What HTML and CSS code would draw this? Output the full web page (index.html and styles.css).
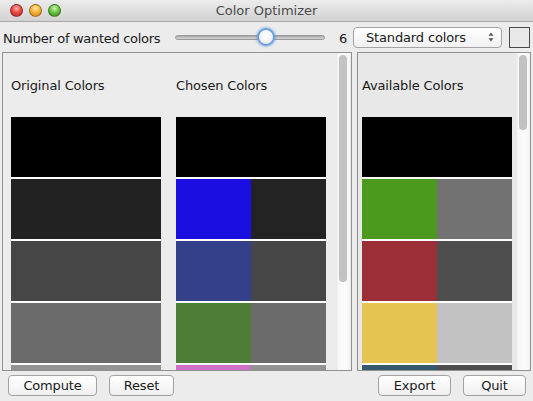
FILE: index.html
```html
<!DOCTYPE html>
<html>
<head>
<meta charset="utf-8">
<link rel="stylesheet" href="styles.css">
</head>
<body>
<div class="window">
  <div class="titlebar">
    <div class="lights">
      <span class="light red"></span>
      <span class="light yellow"></span>
      <span class="light green"></span>
    </div>
    <div class="title">Color Optimizer</div>
  </div>
  <div class="toolbar">
    <div class="tb-label">Number of wanted colors</div>
    <div class="slider">
      <div class="track"></div>
      <div class="thumb"></div>
    </div>
    <div class="count">6</div>
    <div class="select">
      <span>Standard colors</span>
      <svg class="arrows" width="6" height="10" viewBox="0 0 6 10"><path d="M3 0.5 L5.5 3.8 L0.5 3.8 Z M3 9.5 L5.5 6.2 L0.5 6.2 Z" fill="#555"/></svg>
    </div>
    <div class="swatch"></div>
  </div>
  <div class="panels">
    <div class="panel left">
      <div class="cols">
        <div class="col">
          <div class="col-head">Original Colors</div>
          <div class="blocks">
            <div class="blk"><i style="background:#000"></i></div>
            <div class="blk"><i style="background:#222"></i></div>
            <div class="blk"><i style="background:#464646"></i></div>
            <div class="blk"><i style="background:#6b6b6b"></i></div>
            <div class="blk"><i style="background:#939393"></i></div>
          </div>
        </div>
        <div class="col">
          <div class="col-head">Chosen Colors</div>
          <div class="blocks">
            <div class="blk"><i style="background:#000"></i></div>
            <div class="blk"><i style="background:#1a0ee0"></i><i style="background:#232323"></i></div>
            <div class="blk"><i style="background:#34408a"></i><i style="background:#464646"></i></div>
            <div class="blk"><i style="background:#4e7d37"></i><i style="background:#6b6b6b"></i></div>
            <div class="blk"><i style="background:#cc70c6"></i><i style="background:#939393"></i></div>
          </div>
        </div>
      </div>
      <div class="scroll"><div class="sthumb long"></div></div>
    </div>
    <div class="panel right">
      <div class="cols">
        <div class="col">
          <div class="col-head">Available Colors</div>
          <div class="blocks">
            <div class="blk"><i style="background:#000"></i></div>
            <div class="blk"><i style="background:#4b9a1e"></i><i style="background:#727272"></i></div>
            <div class="blk"><i style="background:#9a2f38"></i><i style="background:#4e4e4e"></i></div>
            <div class="blk"><i style="background:#e5c452"></i><i style="background:#c2c2c2"></i></div>
            <div class="blk"><i style="background:#345a6e"></i><i style="background:#4e4e4e"></i></div>
          </div>
        </div>
      </div>
      <div class="scroll"><div class="sthumb short"></div></div>
    </div>
  </div>
  <div class="buttons">
    <button class="btn compute">Compute</button>
    <button class="btn reset">Reset</button>
    <div class="spacer"></div>
    <button class="btn export">Export</button>
    <button class="btn quit">Quit</button>
  </div>
</div>
</body>
</html>
```
FILE: styles.css
```css
* { box-sizing: border-box; }
html, body { margin: 0; padding: 0; }
body {
  width: 533px;
  height: 401px;
  overflow: hidden;
  background: #ececec;
  font-family: "DejaVu Sans", sans-serif;
  font-size: 13px;
  letter-spacing: -0.15px;
  color: #1a1a1a;
}
.window { width: 533px; height: 401px; display: flex; flex-direction: column; }

.titlebar {
  height: 22px;
  position: relative;
  background: linear-gradient(#ececec, #d2d2d2);
  border-bottom: 1px solid #a9a9a9;
  display: flex;
  align-items: center;
  justify-content: center;
}
.lights { position: absolute; left: 10px; top: 4px; display: flex; gap: 6px; }
.light {
  width: 13px; height: 13px; border-radius: 50%;
  border: 1px solid rgba(0,0,0,0.35);
}
.red { background: radial-gradient(circle at 50% 30%, #ffb3ad 0, #ec4b45 45%, #b8201b 100%); }
.yellow { background: radial-gradient(circle at 50% 30%, #ffe9a8 0, #f6b33a 45%, #c57f10 100%); }
.green { background: radial-gradient(circle at 50% 30%, #d5f5b0 0, #6cc442 45%, #2f8a19 100%); }
.title { font-size: 13px; color: #4a4a4a; letter-spacing: 0; }

.toolbar {
  height: 30px;
  display: flex;
  align-items: center;
}
.tb-label { width: 175px; padding-left: 3px; padding-top: 2px; white-space: nowrap; letter-spacing: -0.3px; }
.slider { position: relative; width: 150px; height: 20px; }
.track {
  position: absolute; left: 0; right: 0; top: 8px; height: 5px;
  border-radius: 3px;
  background: linear-gradient(#a9a9a9, #d6d6d6);
  border: 1px solid #9a9a9a;
}
.thumb {
  position: absolute; left: 82px; top: 1px;
  width: 18px; height: 18px; border-radius: 50%;
  background: radial-gradient(circle at 50% 40%, #ffffff 0, #f4f4f4 55%, #dcdcdc 100%);
  border: 2px solid #6a9fdf;
  box-shadow: 0 0 2px 1px rgba(100,150,220,0.55);
}
.count { margin-left: 14px; width: 8px; padding-top: 2px; }
.select {
  margin-left: 6px;
  width: 149px; height: 21px;
  border: 1px solid #a4a4a4;
  border-radius: 4px;
  background: linear-gradient(#ffffff, #f1f1f1);
  display: flex; align-items: center; justify-content: space-between;
  padding: 0 7px 0 12px;
}
.arrows { display: block; }
.swatch {
  margin-left: 7px;
  width: 21px; height: 21px;
  border: 1px solid #4a4a4a;
  background: #e9e9e9;
}

.panels {
  height: 319px;
  display: flex;
  gap: 5px;
  padding-left: 2px;
}
.panel {
  border: 1px solid #909090;
  height: 319px;
  display: flex;
  overflow: hidden;
}
.panel.left { width: 350px; background: #ececec; }
.panel.right { width: 174px; background: #e8e8e8; }
.cols { display: flex; gap: 15px; flex: 1; }
.left .cols { padding-left: 8px; }
.right .cols { padding-left: 4px; }
.col { width: 150px; display: flex; flex-direction: column; }
.col-head {
  height: 64px; flex: none;
  display: flex; align-items: center;
  padding-top: 1px;
  white-space: nowrap;
}
.blocks { display: flex; flex-direction: column; gap: 2px; background: #fdfdfd; }
.blk { height: 60px; flex: none; display: flex; }
.blk i { flex: 1; display: block; }

.scroll {
  width: 14px; flex: none;
  margin-right: 1px;
  background: linear-gradient(90deg, #e6e6e6 0, #f6f6f6 2px, #fcfcfc 60%, #f4f4f4 100%);
  padding: 2px 0 0 3px;
}
.right .scroll { margin-right: 0; }
.sthumb { width: 8px; border-radius: 4px; background: #c2c2c2; }
.sthumb.long { height: 227px; }
.sthumb.short { height: 75px; }

.buttons {
  height: 30px;
  display: flex;
  align-items: flex-start;
  padding: 4px 7px 0 8px;
}
.spacer { flex: 1; }
.btn {
  height: 21px;
  font-family: "DejaVu Sans", sans-serif;
  font-size: 13px;
  letter-spacing: -0.15px;
  color: #1a1a1a;
  border: 1px solid #a2a2a2;
  border-radius: 4px;
  background: linear-gradient(#ffffff, #f0f0f0);
  padding: 0;
  line-height: 19px;
}
.compute { width: 89px; }
.reset { width: 65px; margin-left: 12px; }
.export { width: 73px; }
.quit { width: 63px; margin-left: 12px; }
```
